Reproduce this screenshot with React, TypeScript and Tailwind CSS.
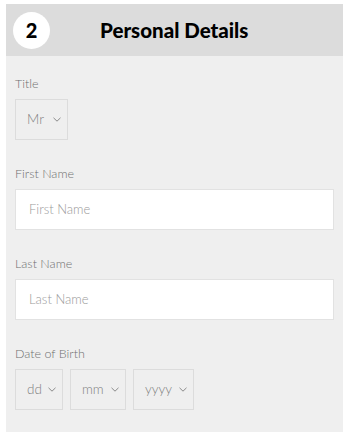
const font = { fontFamily: 'Lato, "Open Sans", sans-serif' }

function Chevron() {
  return (
    <svg width="8" height="5" viewBox="0 0 8 5" fill="none" className="shrink-0">
      <path d="M0.5 0.8 L4 4.2 L7.5 0.8" stroke="#8a8a8a" strokeWidth="1" />
    </svg>
  )
}

function Select({ value, width }: { value: string; width: string }) {
  return (
    <div
      className={`flex h-[41px] ${width} items-center justify-between border border-[#dcdcdc] pl-[11px] pr-[6px] text-[13.5px] font-light text-[#808080]`}
    >
      <span>{value}</span>
      <Chevron />
    </div>
  )
}

function Label({ children }: { children: React.ReactNode }) {
  return <div className="mb-[7px] h-[16px] text-[12.5px] leading-[16px] font-light text-[#707070]">{children}</div>
}

function TextField({ placeholder }: { placeholder: string }) {
  return (
    <div className="flex h-[41px] items-center border border-[#e2e2e2] bg-white pl-[13px] text-[13px] font-light text-[#9a9a9a]">
      {placeholder}
    </div>
  )
}

export default function App() {
  return (
    <div className="min-h-[440px] bg-white px-[6px] pt-[4px]" style={font}>
      <div className="h-[428px] w-[337px] bg-[#efefef]">
        <div className="flex h-[52px] items-center bg-[#dcdcdc] pl-[7px]">
          <div className="flex h-[37px] w-[37px] items-center justify-center rounded-full bg-white text-[20px] font-black text-black">
            2
          </div>
          <div className="ml-[50px] text-[20.5px] font-black text-black">Personal Details</div>
        </div>

        <div className="px-[9px] pt-[20px]">
          <Label>Title</Label>
          <Select value="Mr" width="w-[53px]" />

          <div className="mt-[26px]">
            <Label>First Name</Label>
            <TextField placeholder="First Name" />
          </div>

          <div className="mt-[26px]">
            <Label>Last Name</Label>
            <TextField placeholder="Last Name" />
          </div>

          <div className="mt-[26px]">
            <Label>Date of Birth</Label>
            <div className="flex gap-[7px]">
              <Select value="dd" width="w-[48px]" />
              <Select value="mm" width="w-[56px]" />
              <Select value="yyyy" width="w-[61px]" />
            </div>
          </div>
        </div>
      </div>
    </div>
  )
}
